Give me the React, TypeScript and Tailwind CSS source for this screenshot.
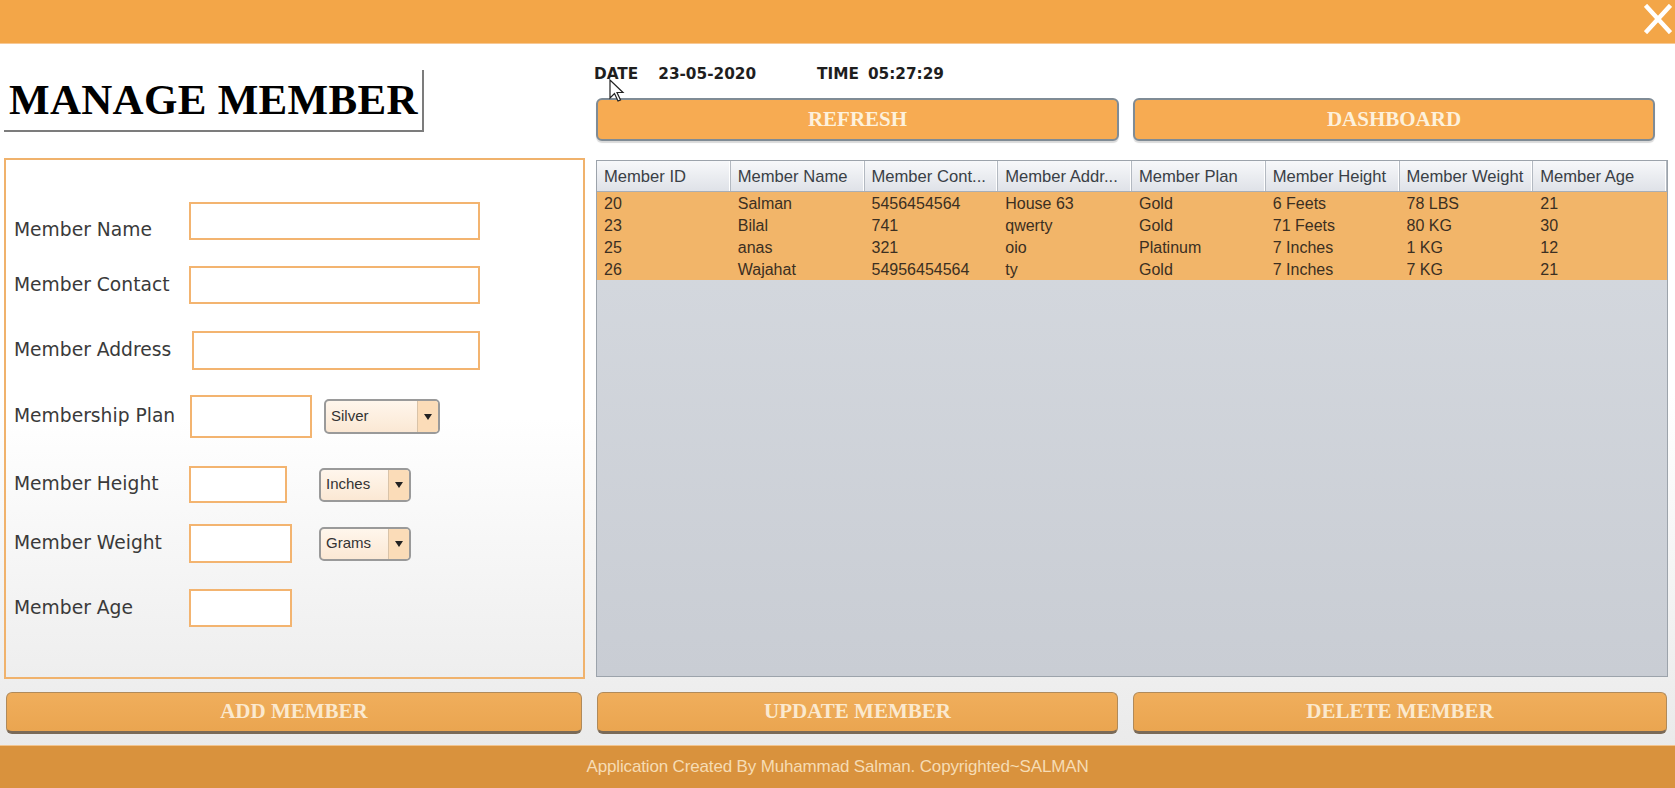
const columns = [
  "Member ID",
  "Member Name",
  "Member Cont...",
  "Member Addr...",
  "Member Plan",
  "Member Height",
  "Member Weight",
  "Member Age",
];

const members = [
  ["20", "Salman", "5456454564", "House 63", "Gold", "6 Feets", "78 LBS", "21"],
  ["23", "Bilal", "741", "qwerty", "Gold", "71 Feets", "80 KG", "30"],
  ["25", "anas", "321", "oio", "Platinum", "7 Inches", "1 KG", "12"],
  ["26", "Wajahat", "54956454564", "ty", "Gold", "7 Inches", "7 KG", "21"],
];

function Field({ w }: { w: string }) {
  return <div className={`h-full ${w} border-2 border-[#f3b470] bg-white`} />;
}

function Combo({ value, w }: { value: string; w: string }) {
  return (
    <div
      className={`${w} h-full flex rounded-[5px] border-2 border-[#9a9a9a] bg-gradient-to-b from-[#fff6ec] to-[#fbe8d4] overflow-hidden`}
    >
      <span className="flex-1 flex items-center pl-[5px] text-[15px] text-[#333] font-['Liberation_Sans',sans-serif]">
        {value}
      </span>
      <span className="w-[21px] flex items-center justify-center border-l border-[#d9c3a8] bg-[#fbdcb8]">
        <svg width="8" height="6" viewBox="0 0 8 6">
          <path d="M0 0 L8 0 L4 6 Z" fill="#222" />
        </svg>
      </span>
    </div>
  );
}

function Label({ text, className = "" }: { text: string; className?: string }) {
  return (
    <span className={`w-[175px] shrink-0 text-[18.7px] text-[#3a3a3a] ${className}`}>{text}</span>
  );
}

function OrangeButton({ text, w }: { text: string; w: string }) {
  return (
    <button
      className={`${w} h-full rounded-[6px] border-2 border-[#7f8b95] bg-[#f7ab52] text-[21px] font-bold text-[#fdf1dc] font-['Liberation_Serif',serif] shadow-[0_2px_1px_rgba(0,0,0,0.15)]`}
    >
      {text}
    </button>
  );
}

function BottomButton({ text, w }: { text: string; w: string }) {
  return (
    <button
      className={`${w} h-full rounded-[6px] border border-[#b08a5a] border-b-[3px] border-b-[#7a6a58] bg-gradient-to-b from-[#f0ae5c] to-[#eaa550] text-[21px] font-bold text-[#fbe9cf] font-['Liberation_Serif',serif]`}
    >
      {text}
    </button>
  );
}

export default function App() {
  return (
    <div className="relative w-[1675px] h-[788px] flex flex-col bg-gradient-to-b from-white via-white to-[#e8e8e8] font-['DejaVu_Sans',sans-serif] overflow-hidden">
      {/* title bar */}
      <div className="h-[44px] shrink-0 flex justify-end items-start bg-[#f3a648] border-b border-[#f8c995]">
        <svg width="28" height="30" viewBox="0 0 28 30" className="mt-[4px] mr-[3px]">
          <path d="M3 3 L25 27 M25 3 L3 27" stroke="white" strokeWidth="4.5" strokeLinecap="square" />
        </svg>
      </div>

      {/* heading + date/time + top buttons */}
      <div className="h-[114px] shrink-0 flex pl-[4px] gap-[11px]">
        <div className="w-[581px]">
          <div className="mt-[26px] w-[420px] h-[62px] border-r-2 border-b-2 border-[#7c7c7c] flex items-center pl-[5px] pb-[2px]">
            <h1 className="text-[43px] font-bold text-black leading-none font-['Liberation_Serif',serif] tracking-[0.3px]">
              MANAGE MEMBER
            </h1>
          </div>
        </div>
        <div className="w-[1072px] flex flex-col">
          <div className="mt-[21px] h-[18px] flex items-center text-[15.3px] font-bold text-[#1e1e1e] -ml-[2px]">
            <span>DATE</span>
            <span className="ml-[20px]">23-05-2020</span>
            <span className="ml-[61px]">TIME</span>
            <span className="ml-[9px]">05:27:29</span>
          </div>
          <div className="mt-[15px] h-[43px] flex gap-[14px]">
            <OrangeButton text="REFRESH" w="w-[523px]" />
            <OrangeButton text="DASHBOARD" w="w-[522px]" />
          </div>
        </div>
      </div>

      {/* form panel + table */}
      <div className="h-[521px] shrink-0 flex pl-[4px] gap-[11px]">
        <div className="w-[581px] h-full border-2 border-[#f0b26c] bg-gradient-to-b from-white via-white to-[#eeeeee] pl-[8px] flex flex-col">
          <div className="mt-[42px] h-[38px] flex items-center">
            <Label text="Member Name" className="mt-[18px]" />
            <Field w="w-[291px]" />
          </div>
          <div className="mt-[26px] h-[38px] flex items-center">
            <Label text="Member Contact" />
            <Field w="w-[291px]" />
          </div>
          <div className="mt-[27px] h-[39px] flex items-center">
            <Label text="Member Address" />
            <div className="w-[3px]" />
            <Field w="w-[288px]" />
          </div>
          <div className="mt-[25px] h-[43px] flex items-center">
            <Label text="Membership Plan" />
            <div className="w-[1px]" />
            <Field w="w-[122px]" />
            <div className="ml-[12px] h-[35px] flex">
              <Combo value="Silver" w="w-[116px]" />
            </div>
          </div>
          <div className="mt-[28px] h-[37px] flex items-center">
            <Label text="Member Height" />
            <Field w="w-[98px]" />
            <div className="ml-[32px] h-[34px] flex">
              <Combo value="Inches" w="w-[92px]" />
            </div>
          </div>
          <div className="mt-[21px] h-[39px] flex items-center">
            <Label text="Member Weight" />
            <Field w="w-[103px]" />
            <div className="ml-[27px] h-[34px] flex">
              <Combo value="Grams" w="w-[92px]" />
            </div>
          </div>
          <div className="mt-[26px] h-[38px] flex items-center">
            <Label text="Member Age" />
            <Field w="w-[103px]" />
          </div>
        </div>

        <div className="w-[1072px] mt-[2px] h-[517px] border border-[#9ca3ab] bg-gradient-to-b from-[#d6dae0] to-[#c9cdd4] flex flex-col font-['Liberation_Sans',sans-serif]">
          <div className="h-[31px] grid grid-cols-8 bg-gradient-to-b from-[#f7f8fa] to-[#dfe2e8] border-b border-[#a8aeb6]">
            {columns.map((c) => (
              <div
                key={c}
                className="flex items-center pl-[7px] pt-[2px] text-[16.6px] text-[#3a3f46] border-r border-[#b3b9c1] shadow-[inset_-1px_0_0_#ffffff] whitespace-nowrap overflow-hidden"
              >
                {c}
              </div>
            ))}
          </div>
          <div className="bg-[#f2b569]">
            {members.map((m) => (
              <div key={m[0]} className="h-[22px] grid grid-cols-8">
                {m.map((v, i) => (
                  <div key={i} className="flex items-center pl-[7px] text-[16px] text-[#3b2f22] whitespace-nowrap">
                    {v}
                  </div>
                ))}
              </div>
            ))}
          </div>
        </div>
      </div>

      {/* action buttons */}
      <div className="mt-[13px] h-[42px] shrink-0 flex pl-[6px]">
        <BottomButton text="ADD MEMBER" w="w-[576px]" />
        <div className="ml-[15px]">
          <BottomButton text="UPDATE MEMBER" w="w-[521px]" />
        </div>
        <div className="ml-[15px]">
          <BottomButton text="DELETE MEMBER" w="w-[534px]" />
        </div>
      </div>

      {/* footer */}
      <div className="mt-[11px] flex-1 flex items-center justify-center bg-[#d9923d] border-t border-[#f2c48e]">
        <span className="text-[17px] text-[#f6dcb4] font-['Liberation_Sans',sans-serif] tracking-[-0.15px]">
          Application Created By Muhammad Salman. Copyrighted~SALMAN
        </span>
      </div>

      {/* mouse pointer */}
      <svg className="absolute left-[609px] top-[79px]" width="16" height="24" viewBox="0 0 16 24">
        <path d="M1 1 L1 19 L5.5 14.5 L9 22 L11.5 21 L8 13.5 L14 13.5 Z" fill="white" stroke="#222" strokeWidth="1.2" />
      </svg>
    </div>
  );
}
